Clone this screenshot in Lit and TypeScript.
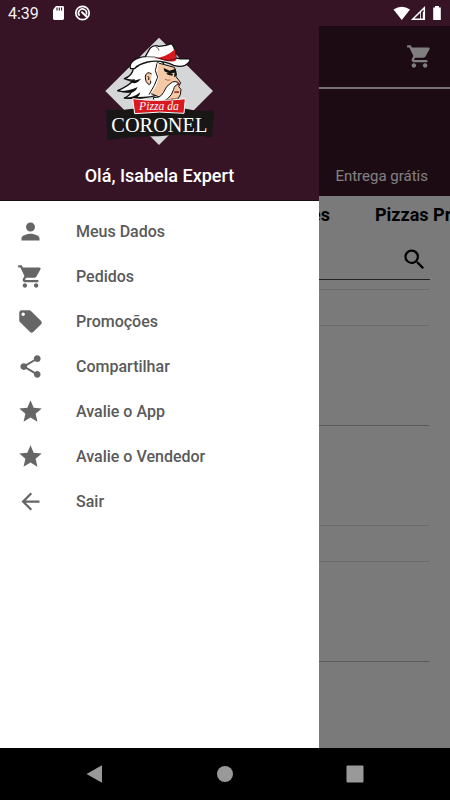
import { LitElement, html, css, svg, nothing } from "lit";
import { customElement, property } from "lit/decorators.js";

const ICONS: Record<string, string> = {
  person:
    "M12 12c2.21 0 4-1.79 4-4s-1.79-4-4-4-4 1.79-4 4 1.79 4 4 4zm0 2c-2.67 0-8 1.34-8 4v2h16v-2c0-2.66-5.33-4-8-4z",
  cart: "M7 18c-1.1 0-1.99.9-1.99 2S5.9 22 7 22s2-.9 2-2-.9-2-2-2zM1 2v2h2l3.6 7.59-1.35 2.45c-.16.28-.25.61-.25.96 0 1.1.9 2 2 2h12v-2H7.42c-.14 0-.25-.11-.25-.25l.03-.12.9-1.63h7.45c.75 0 1.41-.41 1.75-1.03l3.58-6.49A1.003 1.003 0 0020 4H5.21l-.94-2H1zm16 16c-1.1 0-1.99.9-1.99 2s.89 2 1.99 2 2-.9 2-2-.9-2-2-2z",
  tag: "M21.41 11.58l-9-9C12.05 2.22 11.55 2 11 2H4c-1.1 0-2 .9-2 2v7c0 .55.22 1.05.59 1.42l9 9c.36.36.86.58 1.41.58.55 0 1.05-.22 1.41-.59l7-7c.37-.36.59-.86.59-1.41 0-.55-.23-1.06-.59-1.42zM5.5 7C4.67 7 4 6.33 4 5.5S4.67 4 5.5 4 7 4.67 7 5.5 6.33 7 5.5 7z",
  share:
    "M18 16.08c-.76 0-1.44.3-1.96.77L8.91 12.7c.05-.23.09-.46.09-.7s-.04-.47-.09-.7l7.05-4.11c.54.5 1.25.81 2.04.81 1.66 0 3-1.34 3-3s-1.34-3-3-3-3 1.34-3 3c0 .24.04.47.09.7L8.04 9.81C7.5 9.31 6.79 9 6 9c-1.66 0-3 1.34-3 3s1.34 3 3 3c.79 0 1.5-.31 2.04-.81l7.12 4.16c-.05.21-.08.43-.08.65 0 1.61 1.31 2.92 2.92 2.92s2.92-1.31 2.92-2.92-1.31-2.92-2.92-2.92z",
  star: "M12 17.27L18.18 21l-1.64-7.03L22 9.24l-7.19-.61L12 2 9.19 8.63 2 9.24l5.46 4.73L5.82 21z",
  back: "M20 11H7.83l5.59-5.59L12 4l-8 8 8 8 1.41-1.41L7.83 13H20v-2z",
  search:
    "M15.5 14h-.79l-.28-.27A6.471 6.471 0 0016 9.5 6.5 6.5 0 109.5 16c1.61 0 3.09-.59 4.23-1.57l.27.28v.79l5 4.99L20.49 19l-4.99-5zm-6 0C7.01 14 5 11.99 5 9.5S7.01 5 9.5 5 14 7.01 14 9.5 11.99 14 9.5 14z",
};

@customElement("md-icon")
export class MdIcon extends LitElement {
  @property() name = "";

  static styles = css`
    :host {
      display: block;
      width: 27px;
      height: 27px;
      flex: none;
    }
    .glyph {
      display: block;
      width: 100%;
      height: 100%;
      fill: currentColor;
    }
  `;

  render() {
    return html`<svg class="glyph" viewBox="0 0 24 24" aria-hidden="true">
      ${svg`<path d=${ICONS[this.name] ?? ""} />`}
    </svg>`;
  }
}

@customElement("status-bar")
export class StatusBar extends LitElement {
  static styles = css`
    :host {
      display: flex;
      align-items: center;
      height: 26px;
      padding: 0 8px;
      background: #371425;
      color: #f4f0f2;
      font: 16px/28px Roboto, sans-serif;
    }
    .time {
      padding-top: 2px;
      margin-right: 12px;
    }
    .left {
      display: block;
      width: 40px;
      height: 16px;
    }
    .right {
      display: block;
      width: 50px;
      height: 16px;
      margin-left: auto;
    }
  `;

  render() {
    return html`
      <span class="time">4:39</span>
      <svg class="left" viewBox="0 0 40 16" aria-hidden="true">
        <path fill="#fff" d="M5 1h6.600q1.400 0 1.400 1.400v11.200q0 1.400-1.400 1.400H3.400Q2 15 2 13.600V4.800z" />
        <path stroke="#371425" stroke-width="1.100" d="M6 2.500v3M8.300 2.500v3M10.600 2.500v3" />
        <circle cx="31.500" cy="8" r="6.700" fill="none" stroke="#fff" stroke-width="1.700" />
        <path fill="none" stroke="#fff" stroke-width="1.600" d="M28.600 10.800a4 4 0 1 1 6.600-1.200" />
        <path stroke="#fff" stroke-width="2" stroke-linecap="round" d="M31 7.200l4.500 4.300" />
      </svg>
      <svg class="right" viewBox="0 0 50 16" aria-hidden="true">
        <path fill="#fff" d="M1.500 4.500Q9.800-1 18 4.500L9.800 15z" />
        <path fill="none" stroke="#fff" stroke-width="1.500" d="M32.300 2.800v11.400H20.700z" />
        <path fill="#fff" d="M28 7h4v7h-4z" />
        <path fill="#371425" d="M28.800 7.600l2-1.800v7.600h-2z" />
        <path fill="#fff" d="M43 1h4v1.500h1.800v12.500h-7.600V2.500H43z" />
      </svg>
    `;
  }
}

@customElement("brand-logo")
export class BrandLogo extends LitElement {
  static styles = css`
    :host {
      display: block;
      width: 130px;
      height: 120px;
    }
    .art {
      display: block;
      width: 100%;
      height: 100%;
    }
    .small {
      font: italic 35px "Liberation Serif", serif;
    }
    .big {
      font: 61px "Liberation Serif", serif;
    }
  `;

  render() {
    return html`
      <svg class="art" viewBox="0 0 390 360" role="img" aria-label="Pizza da Coronel">
        <path fill="#d5d6d8" d="M192 23L354 183 192 345 31 183z" />
        <path
          fill="#fff"
          stroke="#111"
          stroke-width="4"
          stroke-linejoin="round"
          d="M116 112q-4 26-28 34 16 6 30 4-18 18-50 32 24 6 42 2-6 14-22 20 40 4 80-4l16-4 30-60-10-40-40-14z"
        />
        <path fill="#111" d="M86 148q22 8 52-2-8 12-22 14-10-6-30-12zM66 183q34 2 62-12-4 12-14 16-22 4-48-4zM86 205q30-2 50-18-2 10-8 14 20-2 34 0-40 10-76 4z" />
        <path
          fill="#f5c9a5"
          stroke="#111"
          stroke-width="3"
          stroke-linejoin="round"
          d="M186 98l52 14 6 18-1 10 14 18-6 12 7 8-2 16-8 14-34 2-48-20 8-30z"
        />
        <path fill="#fff" d="M146 108q24-14 46-8l-6 26 6 18-10 26-16 24-28-6z" />
        <path fill="#f5c9a5" stroke="#111" stroke-width="3" d="M170 132q-14-10-19 6-1 20 12 26 6-4 4-12" />
        <path fill="none" stroke="#111" stroke-width="3" d="M186 100l-5 22 7 20-10 24-16 28M158 138q6 4 3 12" />
        <path fill="#111" d="M206 114l18 8 18-6 2 10-18 5-18-7zM214 128l20 4-2 5-14-3zM240 118l5 18-8 6z" />
        <path
          fill="#fff"
          stroke="#111"
          stroke-width="3"
          stroke-linejoin="round"
          d="M232 156q18-4 20 7-14 1-16 15-5 18-18 28-20 16-38 6-6-4-5-10 20 4 30-14 8-22 27-32z"
        />
        <path fill="#a8322c" d="M238 184h14v5h-14zM243 157l12 1-4 6z" />
        <path fill="none" stroke="#7a4a30" stroke-width="2" d="M228 206q8 2 20-2M210 148q8 4 16 2" />
        <path
          fill="#fff"
          stroke="#111"
          stroke-width="4"
          stroke-linejoin="round"
          d="M107 116q-6-12 8-24 16-11 36-12 6-12 14-25 12-12 27-6 22-2 38-8 8 8 10 22l3 21q20 4 41 2 4 10-14 20-14 6-34 0-38-18-78-10-26 6-40 20z"
        />
        <path fill="#d71920" d="M176 84q36 0 64-26l4 32q-8 10-44-1-12-4-24-5z" />
        <path fill="none" stroke="#111" stroke-width="2" d="M151 80q30-2 52 8 20 8 40-3M182 50q10 4 10 12" />
        <path fill="#181716" d="M34 239q42 4 78-3h160q42 10 86 5l-7 81q-80-12-159-3-82-1-155 12z" />
        <path fill="#d71920" stroke="#fff" stroke-width="3" d="M113 206q40 6 79 5 40 0 79-5l-4 44q-72-8-148 1z" />
        <text class="small" x="192" y="240" text-anchor="middle" fill="#fff">Pizza da</text>
        <text class="big" x="193" y="305" text-anchor="middle" fill="#fff">CORONEL</text>
      </svg>
    `;
  }
}

interface MenuEntry {
  icon: string;
  label: string;
}

@customElement("side-drawer")
export class SideDrawer extends LitElement {
  private entries: MenuEntry[] = [
    { icon: "person", label: "Meus Dados" },
    { icon: "cart", label: "Pedidos" },
    { icon: "tag", label: "Promoções" },
    { icon: "share", label: "Compartilhar" },
    { icon: "star", label: "Avalie o App" },
    { icon: "star", label: "Avalie o Vendedor" },
    { icon: "back", label: "Sair" },
  ];

  static styles = css`
    :host {
      display: block;
      background: #fff;
      font-family: Roboto, sans-serif;
    }
    .head {
      display: flex;
      flex-direction: column;
      align-items: center;
      box-sizing: border-box;
      height: 175px;
      padding-top: 4px;
      background: #371425;
      border-bottom: 1px solid #1b0a12;
    }
    .hello {
      margin: 14px 0 0;
      color: #fff;
      font-size: 18px;
      line-height: 24px;
      font-weight: 500;
    }
    .menu {
      margin: 0;
      padding: 8px 0;
      list-style: none;
    }
    .entry {
      display: flex;
      align-items: center;
      gap: 32px;
      width: 100%;
      height: 45px;
      padding: 0 17px;
      border: 0;
      background: none;
      color: #666;
      font: 500 16px/24px Roboto, sans-serif;
      text-align: left;
    }
    .label {
      color: #5a5a5a;
    }
  `;

  render() {
    return html`
      <header class="head">
        <brand-logo></brand-logo>
        <p class="hello">Olá, Isabela Expert</p>
      </header>
      <ul class="menu">
        ${this.entries.map(
          (e) => html`<li>
            <button class="entry" type="button">
              <md-icon name=${e.icon}></md-icon><span class="label">${e.label}</span>
            </button>
          </li>`
        )}
      </ul>
    `;
  }
}

@customElement("store-page")
export class StorePage extends LitElement {
  static styles = css`
    :host {
      display: block;
      background: #f4f4f4;
      font-family: Roboto, sans-serif;
      overflow: hidden;
    }
    .bar {
      display: flex;
      align-items: center;
      justify-content: flex-end;
      box-sizing: border-box;
      height: 63px;
      padding: 0 17px;
      background: #3a1628;
      border-bottom: 2px solid #e6e6e6;
    }
    .cart {
      padding: 0;
      border: 0;
      background: none;
      color: #fff;
    }
    .info {
      display: flex;
      align-items: flex-end;
      justify-content: flex-end;
      box-sizing: border-box;
      height: 107px;
      padding: 0 22px 8px;
      background: #3a1628;
      color: #fff;
      font-size: 15px;
      line-height: 24px;
    }
    .tabs {
      display: flex;
      gap: 45px;
      height: 37px;
      font-size: 18px;
      line-height: 37px;
      font-weight: 700;
      white-space: nowrap;
    }
    .tab {
      flex: none;
      color: #000;
      text-decoration: none;
    }
    .first {
      width: 330px;
      text-align: right;
    }
    .search {
      display: flex;
      align-items: flex-end;
      box-sizing: border-box;
      height: 47px;
      margin: 0 20px;
      padding: 0 2px 6px 0;
      border-bottom: 1px solid #444;
    }
    .query {
      flex: 1;
      min-width: 0;
      border: 0;
      background: none;
      outline: none;
      font: 16px Roboto, sans-serif;
    }
    .rows {
      display: flex;
      flex-direction: column;
      margin: 9px 21px 0;
      border-top: 1px solid #d4d4d4;
    }
    .title {
      height: 35px;
      border-bottom: 1px solid #d4d4d4;
    }
    .product {
      height: 99px;
      border-bottom: 1px solid #b4b4b4;
    }
    .last {
      border-bottom-color: #d4d4d4;
    }
  `;

  render() {
    return html`
      <div class="bar">
        <button class="cart" type="button" aria-label="Carrinho"><md-icon name="cart"></md-icon></button>
      </div>
      <div class="info">Entrega grátis</div>
      <nav class="tabs">
        <a class="tab first" href="#promocoes">Promoções</a>
        <a class="tab" href="#pizzas">Pizzas Promo</a>
      </nav>
      <div class="search">
        <input class="query" type="text" aria-label="Buscar" />
        <md-icon name="search"></md-icon>
      </div>
      <div class="rows">
        ${[1, 2].map(
          (section) => html`
            <div class="title"></div>
            <div class="product"></div>
            ${section === 1 ? html`<div class="product last"></div>` : nothing}
          `
        )}
      </div>
    `;
  }
}

@customElement("app-root")
export class AppRoot extends LitElement {
  static styles = css`
    :host {
      display: flex;
      flex-direction: column;
      min-height: 100vh;
    }
    .stage {
      position: relative;
      display: flex;
      flex: 1;
    }
    .page {
      flex: 1;
      min-width: 0;
    }
    .scrim {
      position: absolute;
      inset: 0;
      background: rgba(0, 0, 0, 0.5);
    }
    .drawer {
      position: absolute;
      top: 0;
      bottom: 0;
      left: 0;
      width: 319px;
      max-width: 85%;
    }
    .keys {
      display: flex;
      align-items: center;
      justify-content: center;
      gap: 32px;
      height: 52px;
      background: #000;
    }
    .key {
      display: flex;
      justify-content: center;
      width: 98px;
      padding: 0;
      border: 0;
      background: none;
    }
    .shape {
      display: block;
      width: 18px;
      height: 18px;
      fill: #999;
    }
  `;

  private key(label: string, shape: unknown) {
    return html`<button class="key" type="button" aria-label=${label}>
      <svg class="shape" viewBox="0 0 18 18">${shape}</svg>
    </button>`;
  }

  render() {
    return html`
      <status-bar></status-bar>
      <main class="stage">
        <store-page class="page"></store-page>
        <div class="scrim"></div>
        <side-drawer class="drawer"></side-drawer>
      </main>
      <nav class="keys">
        ${this.key("Voltar", svg`<path d="M0.500 9L15.500.500Q16 0 16 1v16q0 1-.500.500z" />`)}
        ${this.key("Início", svg`<circle cx="9" cy="9" r="8" />`)}
        ${this.key("Recentes", svg`<rect x="0.500" y="0.500" width="17" height="17" rx="1" />`)}
      </nav>
    `;
  }
}
